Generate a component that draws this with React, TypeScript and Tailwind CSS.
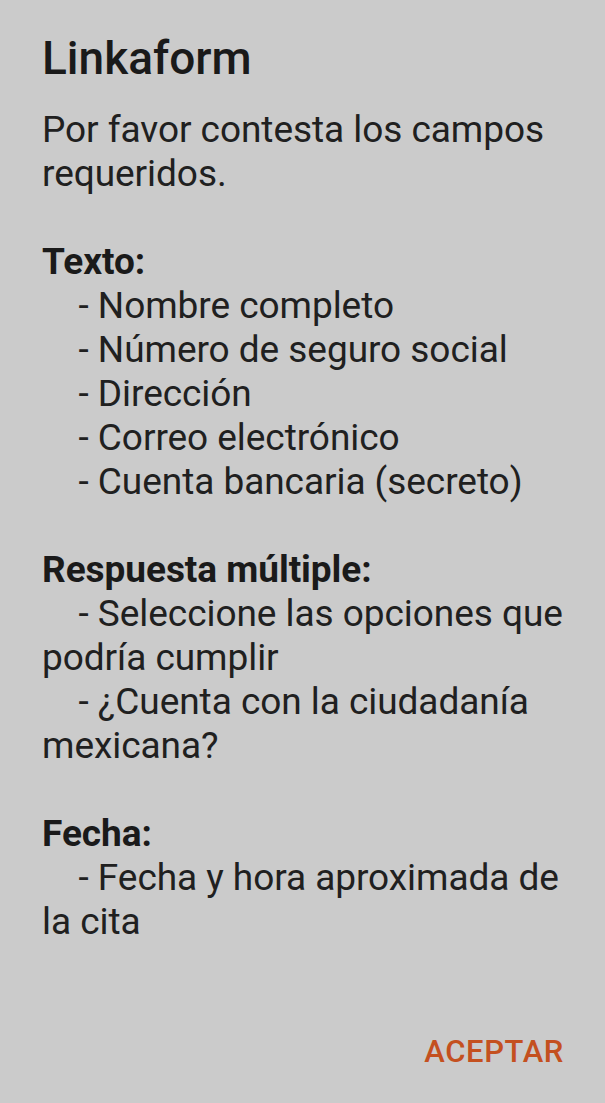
const sections = [
  {
    heading: "Texto:",
    items: [
      "Nombre completo",
      "Número de seguro social",
      "Dirección",
      "Correo electrónico",
      "Cuenta bancaria (secreto)",
    ],
  },
  {
    heading: "Respuesta múltiple:",
    items: [
      "Seleccione las opciones que podría cumplir",
      "¿Cuenta con la ciudadanía mexicana?",
    ],
  },
  {
    heading: "Fecha:",
    items: ["Fecha y hora aproximada de la cita"],
  },
];

export default function App() {
  return (
    <div className="flex h-[1103px] w-full flex-col bg-[#cbcbcb] pl-[42px] pr-[20px] pt-[31px] font-['Roboto',sans-serif] text-[#1d1d1d]">
      <h1 className="text-[46px] font-medium leading-[54px] text-[#1a1a1a]">
        Linkaform
      </h1>

      <div className="mt-[23px] whitespace-pre-wrap text-[37px] leading-[44px] tracking-[-0.05px] text-[#202020]">
        <p>Por favor contesta los campos requeridos.</p>
        {sections.map((s) => (
          <div key={s.heading}>
            <p>{"\u00a0"}</p>
            <p className="font-bold text-[#1a1a1a]">{s.heading}</p>
            {s.items.map((item) => (
              <p key={item}>{"\u00a0\u00a0\u00a0\u00a0- " + item}</p>
            ))}
          </div>
        ))}
      </div>

      <div className="mt-[90px] flex justify-end pr-[21px]">
        <button className="text-[31px] font-medium uppercase leading-[36px] tracking-[0.02em] text-[#c4501f]">
          Aceptar
        </button>
      </div>
    </div>
  );
}
